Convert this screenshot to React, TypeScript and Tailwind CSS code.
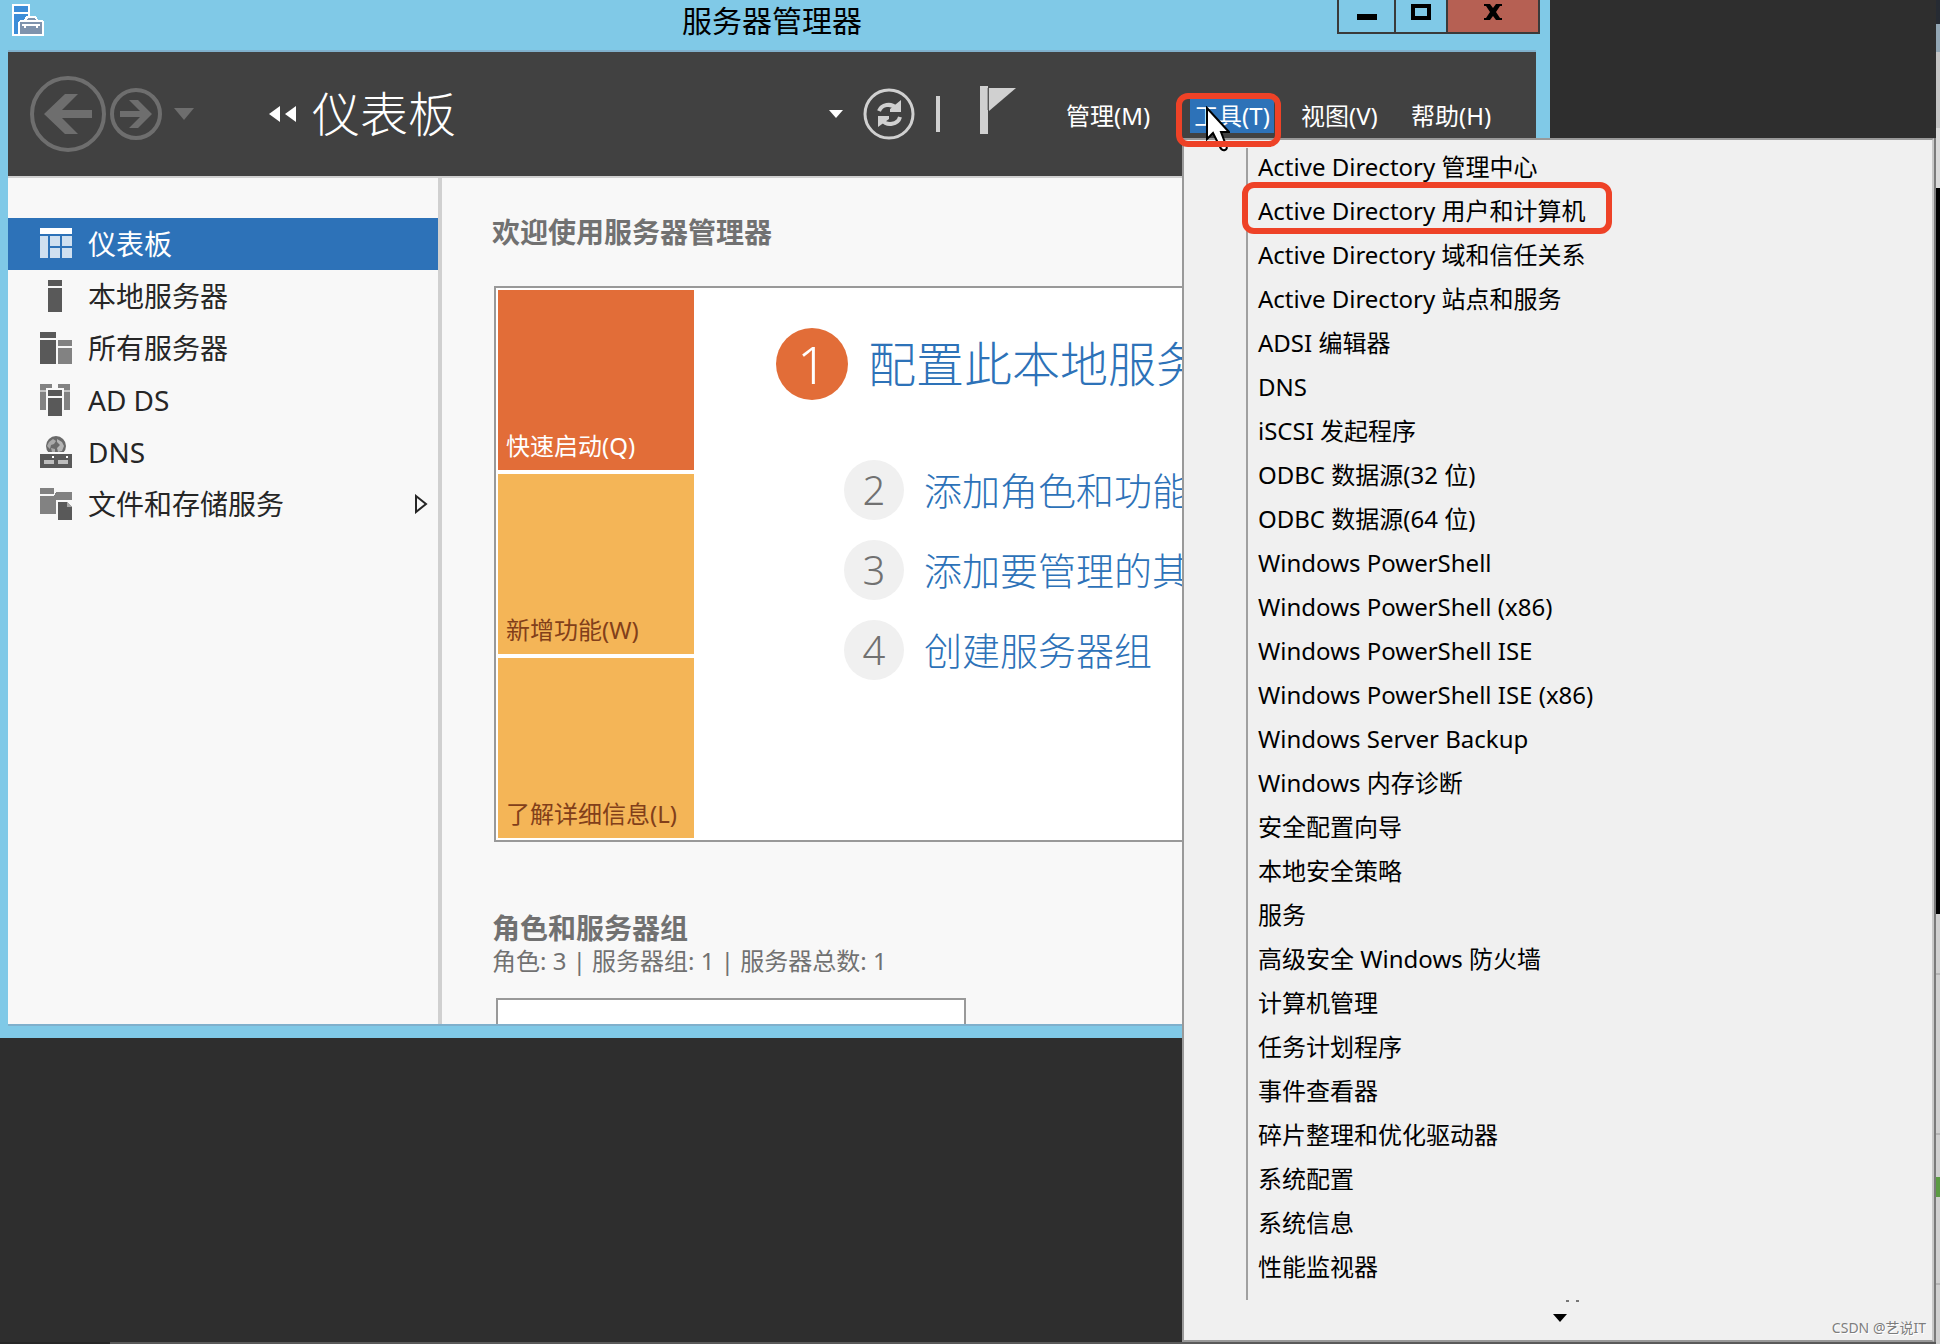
import React from "react";

const FONT = "font-['Noto_Sans','Noto_Sans_CJK_SC',sans-serif]";

const toolItems = [
  "Active Directory 管理中心",
  "Active Directory 用户和计算机",
  "Active Directory 域和信任关系",
  "Active Directory 站点和服务",
  "ADSI 编辑器",
  "DNS",
  "iSCSI 发起程序",
  "ODBC 数据源(32 位)",
  "ODBC 数据源(64 位)",
  "Windows PowerShell",
  "Windows PowerShell (x86)",
  "Windows PowerShell ISE",
  "Windows PowerShell ISE (x86)",
  "Windows Server Backup",
  "Windows 内存诊断",
  "安全配置向导",
  "本地安全策略",
  "服务",
  "高级安全 Windows 防火墙",
  "计算机管理",
  "任务计划程序",
  "事件查看器",
  "碎片整理和优化驱动器",
  "系统配置",
  "系统信息",
  "性能监视器",
];

function AppIcon() {
  return (
    <svg width="32" height="32" viewBox="0 0 32 32" shapeRendering="crispEdges" aria-hidden="true">
      <rect x="0" y="0" width="18" height="32" fill="#fff" />
      <rect x="2" y="2" width="14" height="6" fill="#3c8dd8" />
      <rect x="2" y="10" width="14" height="20" fill="#3c8dd8" />
      <path d="M6 18l2-2h4l2-4h10l2 4h4l2 2v14H6z" fill="#fff" />
      <path d="M16 14h6l2 2h-10z" fill="#7f93ad" />
      <path d="M8 18h22v12H8z" fill="#7f93ad" />
      <path d="M10 20h18v2h-2v2h-2v-2H14v2h-2v-2h-2z" fill="#fff" />
    </svg>
  );
}

function DashboardIcon() {
  return (
    <svg width="32" height="32" viewBox="0 0 32 32" shapeRendering="crispEdges" aria-hidden="true">
      <rect x="0" y="0" width="32" height="6" fill="#fff" />
      <g fill="#cfe0f0">
        <rect x="0" y="8" width="8" height="22" />
        <rect x="10" y="8" width="10" height="10" />
        <rect x="22" y="8" width="10" height="10" />
        <rect x="10" y="20" width="10" height="10" />
        <rect x="22" y="20" width="10" height="10" />
      </g>
    </svg>
  );
}

function LocalServerIcon() {
  return (
    <svg width="32" height="32" viewBox="0 0 32 32" shapeRendering="crispEdges" fill="#595959" aria-hidden="true">
      <rect x="8" y="0" width="14" height="6" />
      <rect x="8" y="8" width="14" height="24" />
    </svg>
  );
}

function AllServersIcon() {
  return (
    <svg width="32" height="32" viewBox="0 0 32 32" shapeRendering="crispEdges" aria-hidden="true">
      <g fill="#595959">
        <rect x="0" y="0" width="16" height="6" />
        <rect x="0" y="8" width="16" height="24" />
      </g>
      <g fill="#828282">
        <rect x="18" y="8" width="14" height="6" />
        <rect x="18" y="16" width="14" height="16" />
      </g>
    </svg>
  );
}

function AdDsIcon() {
  return (
    <svg width="32" height="32" viewBox="0 0 32 32" shapeRendering="crispEdges" aria-hidden="true">
      <g fill="#828282">
        <path d="M0 0h12v4H6v2H0z" />
        <path d="M18 0h12v6h-6V4h-6z" />
        <rect x="0" y="8" width="6" height="18" />
        <rect x="24" y="8" width="6" height="18" />
      </g>
      <g fill="#c4c4c4">
        <rect x="0" y="6" width="6" height="2" />
        <rect x="24" y="6" width="6" height="2" />
      </g>
      <g fill="#595959">
        <rect x="8" y="6" width="14" height="6" />
        <rect x="8" y="14" width="14" height="18" />
      </g>
    </svg>
  );
}

function DnsIcon() {
  return (
    <svg width="32" height="32" viewBox="0 0 32 32" aria-hidden="true">
      <circle cx="16" cy="10" r="10" fill="#6a6a6a" />
      <path d="M9 6l4-3 3 2-2 3-3 1-1 4-3-3z" fill="#a9a9a9" />
      <path d="M17 3l5 3 2 4-2 5-4 1-1-4 3-3-3-3z" fill="#b5b5b5" />
      <path d="M11 12l4 1v3h-3z" fill="#a9a9a9" />
      <g shapeRendering="crispEdges">
        <rect x="4" y="16" width="24" height="2" fill="#f8f8f8" />
        <rect x="0" y="18" width="32" height="14" fill="#595959" />
        <rect x="4" y="24" width="10" height="4" fill="#bdbdbd" />
        <rect x="18" y="24" width="10" height="4" fill="#bdbdbd" />
        <rect x="12" y="20" width="2" height="2" fill="#fff" />
        <rect x="26" y="20" width="2" height="2" fill="#fff" />
      </g>
    </svg>
  );
}

function StorageIcon() {
  return (
    <svg width="32" height="32" viewBox="0 0 32 32" shapeRendering="crispEdges" aria-hidden="true">
      <g fill="#828282">
        <rect x="0" y="0" width="14" height="6" />
        <path d="M0 8h14l2-4h16v8H16v14H0z" />
      </g>
      <path d="M18 14h9l5 5v13H18z" fill="#595959" />
      <path d="M27 14l5 5h-5z" fill="#a5a5a5" />
    </svg>
  );
}

const sideItems = [
  { label: "仪表板", icon: <DashboardIcon />, active: true },
  { label: "本地服务器", icon: <LocalServerIcon /> },
  { label: "所有服务器", icon: <AllServersIcon /> },
  { label: "AD DS", icon: <AdDsIcon /> },
  { label: "DNS", icon: <DnsIcon /> },
  { label: "文件和存储服务", icon: <StorageIcon />, expandable: true },
];

const steps = ["添加角色和功能", "添加要管理的其", "创建服务器组"];

function TitleBar() {
  return (
    <header className="grid h-[50px] grid-cols-[1fr_auto_1fr] items-start pr-[10px] pl-1">
      <div className="pt-1 pl-2">
        <AppIcon />
      </div>
      <h1 className="text-[30px] leading-[42px] text-black">服务器管理器</h1>
      <div className="flex h-[34px] justify-self-end border-x-2 border-b-2 border-[#3a3a3a]">
        <button aria-label="最小化" className="flex w-[57px] justify-center border-r-2 border-[#3a3a3a] pt-[14px]">
          <span className="h-[6px] w-5 bg-black" />
        </button>
        <button aria-label="最大化" className="flex w-[52px] justify-center border-r-2 border-[#3a3a3a] pt-1">
          <span className="h-4 w-5 border-4 border-black" />
        </button>
        <button aria-label="关闭" className="flex w-[90px] justify-center bg-[#b66053] pt-1">
          <svg width="18" height="16" viewBox="0 0 18 16" aria-hidden="true">
            <path d="M0 0h6l3 4 3-4h6v2h-2l-4 6 4 6h2v2h-6l-3-4-3 4H0v-2h2l4-6-4-6H0z" fill="#000" />
          </svg>
        </button>
      </div>
    </header>
  );
}

function ToolsMenu() {
  return (
    <div className="absolute top-[39px] -left-2 z-10 w-[754px] border-r-2 border-[#7a7a7a]">
      <div className="border-2 border-[#999999] border-r-[#c8c8c8] bg-[#f0f0f0] pt-2 pl-[62px]">
        <ul role="menu" className="border-l-2 border-[#a0a0a0] pb-2">
          {toolItems.map((item, i) => (
            <li key={item} role="none" className="relative mb-[6px]">
              <button role="menuitem" className="block w-full pl-[10px] text-left text-[24px] leading-[38px] whitespace-nowrap text-black">
                {item}
              </button>
              {i === 1 && (
                <span className="absolute -top-[10px] -left-[6px] h-[52px] w-[370px] rounded-xl border-6 border-[#ee4227]" />
              )}
            </li>
          ))}
        </ul>
        <div className="flex h-10 justify-center pr-[46px]">
          <svg width="28" height="24" viewBox="0 0 28 24" aria-hidden="true">
            <path d="M14 0h3v2h-3zM24 0h3v2h-3z" fill="#777" />
            <path d="M1 14h14l-7 8z" fill="#000" />
          </svg>
        </div>
      </div>
      <p className="absolute right-2 bottom-1 text-[14px] leading-5 text-[#7d7d7d] [text-shadow:1px_1px_0_#fff]">CSDN @艺说IT</p>
    </div>
  );
}

function Toolbar() {
  return (
    <div className="flex h-[124px] items-center bg-[#414141] pr-[42px] pl-[22px]">
      <button aria-label="后退">
        <svg width="76" height="76" viewBox="0 0 76 76" aria-hidden="true">
          <circle cx="38" cy="38" r="36" fill="none" stroke="#6e6e6e" strokeWidth="4" />
          <path d="M14 38l21-20h13L32 34h30v8H32l16 16H35z" fill="#6e6e6e" />
        </svg>
      </button>
      <button aria-label="前进" className="ml-1">
        <svg width="52" height="52" viewBox="0 0 52 52" aria-hidden="true">
          <circle cx="26" cy="26" r="24" fill="none" stroke="#6e6e6e" strokeWidth="4" />
          <path d="M42 26L28 40h-9l11-11H10v-6h20L19 12h9z" fill="#6e6e6e" />
        </svg>
      </button>
      <button aria-label="历史记录" className="ml-3">
        <svg width="20" height="12" viewBox="0 0 20 12" aria-hidden="true">
          <path d="M0 0h20L10 12z" fill="#6e6e6e" />
        </svg>
      </button>
      <svg className="ml-[75px]" width="27" height="16" viewBox="0 0 27 16" aria-hidden="true">
        <path d="M0 8L11 0v16zM16 8L27 0v16z" fill="#fff" />
      </svg>
      <h2 className="ml-4 text-[48px] leading-[60px] font-light text-white">仪表板</h2>
      <div className="ml-auto flex items-center">
        <button aria-label="更多" className="mr-5">
          <svg width="14" height="8" viewBox="0 0 14 8" aria-hidden="true">
            <path d="M0 0h14L7 8z" fill="#fff" />
          </svg>
        </button>
        <button aria-label="刷新">
          <svg width="52" height="52" viewBox="0 0 52 52" aria-hidden="true">
            <circle cx="26" cy="26" r="24" fill="none" stroke="#d0d0d0" strokeWidth="3" />
            <g fill="none" stroke="#d0d0d0" strokeWidth="4">
              <path d="M16 23a10 9 0 0 1 17-3" />
              <path d="M37 29a10 9 0 0 1-18 3" />
            </g>
            <path d="M38 12v12H27v-3zM15 28h11v3L15 39z" fill="#d0d0d0" />
          </svg>
        </button>
        <span className="ml-[21px] h-9 w-1 bg-[#d0d0d0]" />
        <button aria-label="通知" className="ml-10 pb-2">
          <svg width="36" height="48" viewBox="0 0 36 48" aria-hidden="true">
            <rect x="0" y="0" width="8" height="48" fill="#d0d0d0" />
            <path d="M9 2h27L9 25z" fill="#d0d0d0" />
            <path d="M8 2v22" stroke="#6a6a6a" strokeWidth="1" />
          </svg>
        </button>
      </div>
      <nav className="ml-[50px] flex items-center pt-1 text-left text-[24px] leading-[34px] whitespace-nowrap text-white">
        <button className="mr-[37px] w-[87px] text-left">管理(M)</button>
        <div className="relative">
          <button aria-haspopup="menu" aria-expanded="true" className="block w-[84px] bg-[#2d72b8]">
            工具(T)
          </button>
          <ToolsMenu />
          <svg className="absolute top-[7px] left-4 z-20" width="24" height="46" viewBox="0 0 24 46" aria-hidden="true">
            <path d="M1 2v31l6-6 7 14q2 4 5 3t1-5l-5-13h8z" fill="#fff" stroke="#000" strokeWidth="2" />
          </svg>
          <span className="absolute -top-[6px] -left-[14px] z-20 h-[54px] w-[105px] rounded-xl border-6 border-[#ee4227]" />
        </div>
        <button className="ml-[27px] w-20 text-left">视图(V)</button>
        <button className="ml-[30px] w-[83px] text-left">帮助(H)</button>
      </nav>
    </div>
  );
}

function Sidebar() {
  return (
    <nav className="w-[434px] shrink-0 border-r-4 border-[#d0d0d0] pt-10">
      {sideItems.map((s) => (
        <a
          key={s.label}
          href="#"
          className={
            s.active
              ? "flex h-[52px] items-center gap-4 bg-[#2d72b8] pr-[10px] pl-8 text-[28px] leading-9 text-white"
              : "flex h-[52px] items-center gap-4 pr-[10px] pl-8 text-[28px] leading-9 text-[#262626]"
          }
        >
          {s.icon}
          <span className="flex-1">{s.label}</span>
          {s.expandable && (
            <svg width="13" height="20" viewBox="0 0 13 20" aria-hidden="true">
              <path d="M1 2l10 8-10 8z" fill="none" stroke="#262626" strokeWidth="2" />
            </svg>
          )}
        </a>
      ))}
    </nav>
  );
}

function Dashboard() {
  return (
    <main className="min-w-0 flex-1 overflow-hidden pl-[50px]">
      <h3 className="pt-9 text-[28px] leading-9 font-bold text-[#717171]">欢迎使用服务器管理器</h3>
      <section className="mt-9 ml-[2px] flex border-2 border-r-0 border-[#999999] bg-white p-[2px]">
        <div className="flex w-[196px] shrink-0 flex-col gap-1 text-[24px] leading-8">
          <button className="flex h-[180px] items-end bg-[#e26d38] px-2 pb-2 text-white">快速启动(Q)</button>
          <button className="flex h-[180px] items-end bg-[#f4b557] px-2 pb-2 text-[#823f1a]">新增功能(W)</button>
          <button className="flex h-[180px] items-end bg-[#f4b557] px-2 pb-2 text-[#823f1a]">了解详细信息(L)</button>
        </div>
        <div className="min-w-0 flex-1 overflow-hidden pt-[38px] pl-[82px] font-light whitespace-nowrap text-[#2d72b8]">
          <a href="#" className="flex items-center gap-5 text-[48px] leading-[72px]">
            <span className="size-[72px] shrink-0 rounded-full bg-[#e26d38] text-center text-[52px] text-white">1</span>
            配置此本地服务
          </a>
          <ol className="mt-[60px] flex flex-col gap-5 pl-[68px]">
            {steps.map((t, i) => (
              <li key={t}>
                <a href="#" className="flex items-center gap-5 text-[38px] leading-[60px]">
                  <span className="size-[60px] shrink-0 rounded-full bg-[#f0f0f0] text-center text-[40px] text-[#717171]">{i + 2}</span>
                  {t}
                </a>
              </li>
            ))}
          </ol>
        </div>
      </section>
      <h3 className="mt-[68px] text-[28px] leading-9 font-bold text-[#717171]">角色和服务器组</h3>
      <p className="text-[24px] leading-[30px] text-[#717171]">角色: 3 | 服务器组: 1 | 服务器总数: 1</p>
      <div className="mt-[22px] ml-1 h-[26px] w-[470px] border-2 border-b-0 border-[#999999] bg-white" />
    </main>
  );
}

function EdgeStrip() {
  return (
    <div className="flex w-1 shrink-0 flex-col bg-[#d0d0d0]">
      <span className="h-6 bg-[#262b33]" />
      <span className="h-7 bg-[#93a7b5]" />
      <span className="h-[76px] bg-[#c4c4c4]" />
      <span className="h-[60px] bg-[#dadada]" />
      <span className="h-[726px] bg-black" />
      <span className="h-[61px] border-b-2 border-[#b5b5b5]" />
      <span className="h-[160px] border-b-2 border-[#b5b5b5]" />
      <span className="h-[42px]" />
      <span className="h-5 bg-[#5b9b43]" />
      <span className="h-[88px] border-b-2 border-[#b5b5b5]" />
    </div>
  );
}

export default function App() {
  return (
    <div className={`flex min-h-screen ${FONT}`}>
      <div className="flex min-w-0 flex-1 flex-col justify-between bg-[#2e2e2e]">
        <div className="w-[calc(100%-386px)] bg-[#80c9e7] pb-3">
          <TitleBar />
          <div className="mr-[14px] ml-2 border-y-2 border-[#80b0cc]">
            <Toolbar />
            <div className="flex border-t-2 border-[#d0d0d0] bg-[#f8f8f8]">
              <Sidebar />
              <Dashboard />
            </div>
          </div>
        </div>
        <div className="h-[2px] border-l-[110px] border-[#262626] bg-[#5a5a5a]" />
      </div>
      <EdgeStrip />
    </div>
  );
}
